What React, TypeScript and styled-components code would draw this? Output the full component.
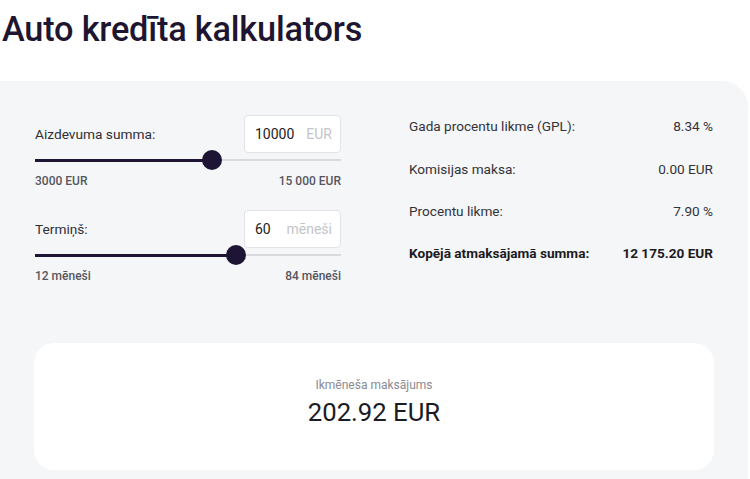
import styled, { createGlobalStyle } from "styled-components";
import { useState } from "react";

const GlobalStyle = createGlobalStyle`
  body {
    margin: 0;
    background: #fff;
    font-family: Roboto, "Liberation Sans", sans-serif;
    color: #2b2b33;
  }
`;

type SliderProps = {
  label: string;
  unit: string;
  min: number;
  max: number;
  value: number;
  minLabel: string;
  maxLabel: string;
  onChange: (v: number) => void;
};

function SliderField(props: SliderProps) {
  const pct = ((props.value - props.min) / (props.max - props.min)) * 100;
  return (
    <Field>
      <FieldHead>
        <FieldLabel>{props.label}</FieldLabel>
        <ValueBox>
          <ValueText>{props.value}</ValueText>
          <UnitText>{props.unit}</UnitText>
        </ValueBox>
      </FieldHead>
      <Range
        type="range"
        min={props.min}
        max={props.max}
        value={props.value}
        onChange={(e) => props.onChange(Number(e.target.value))}
        style={{
          backgroundSize: `${pct}% 3px, 100% 2px`,
        }}
      />
      <Limits>
        <span>{props.minLabel}</span>
        <span>{props.maxLabel}</span>
      </Limits>
    </Field>
  );
}

export default function App() {
  const [amount, setAmount] = useState(10000);
  const [term, setTerm] = useState(60);

  return (
    <>
      <GlobalStyle />
      <Title>Auto kredīta kalkulators</Title>
      <Panel>
        <Columns>
          <LeftColumn>
            <SliderField
              label="Aizdevuma summa:"
              unit="EUR"
              min={3000}
              max={15000}
              value={amount}
              minLabel="3000 EUR"
              maxLabel="15 000 EUR"
              onChange={setAmount}
            />
            <SliderField
              label="Termiņš:"
              unit="mēneši"
              min={12}
              max={84}
              value={term}
              minLabel="12 mēneši"
              maxLabel="84 mēneši"
              onChange={setTerm}
            />
          </LeftColumn>
          <RightColumn>
            <InfoRow>
              <span>Gada procentu likme (GPL):</span>
              <span>8.34 %</span>
            </InfoRow>
            <InfoRow>
              <span>Komisijas maksa:</span>
              <span>0.00 EUR</span>
            </InfoRow>
            <InfoRow>
              <span>Procentu likme:</span>
              <span>7.90 %</span>
            </InfoRow>
            <InfoRow $bold>
              <span>Kopējā atmaksājamā summa:</span>
              <span>12 175.20 EUR</span>
            </InfoRow>
          </RightColumn>
        </Columns>
        <ResultCard>
          <ResultLabel>Ikmēneša maksājums</ResultLabel>
          <ResultValue>202.92 EUR</ResultValue>
        </ResultCard>
      </Panel>
    </>
  );
}

const Title = styled.h1`
  margin: 0;
  padding: 9px 0 0 2px;
  height: 81px;
  box-sizing: border-box;
  font-size: 34.3px;
  font-weight: 500;
  color: #1e1631;
  letter-spacing: -0.2px;
`;

const Panel = styled.section`
  width: 748px;
  background: #f5f6f8;
  border-radius: 0 26px 0 0;
  padding: 34px 35px 9px 35px;
  box-sizing: border-box;
`;

const Columns = styled.div`
  display: grid;
  grid-template-columns: 306px 304px;
  column-gap: 68px;
`;

const LeftColumn = styled.div`
  display: flex;
  flex-direction: column;
  gap: 22px;
`;

const Field = styled.div`
  display: flex;
  flex-direction: column;
`;

const FieldHead = styled.div`
  display: flex;
  align-items: center;
  justify-content: space-between;
  height: 38px;
`;

const FieldLabel = styled.span`
  font-size: 13.7px;
  color: #2f2f36;
`;

const ValueBox = styled.div`
  width: 97px;
  height: 38px;
  box-sizing: border-box;
  background: #fff;
  border: 1px solid #e2e3e6;
  border-radius: 4px;
  display: flex;
  align-items: center;
  justify-content: space-between;
  padding: 0 8px 0 10px;
`;

const ValueText = styled.span`
  font-size: 14px;
  color: #222;
`;

const UnitText = styled.span`
  font-size: 14px;
  color: #c4c5c9;
`;

const Range = styled.input`
  -webkit-appearance: none;
  appearance: none;
  width: 100%;
  height: 20px;
  margin: -3px 0 0 0;
  background-color: transparent;
  background-image: linear-gradient(#1e1433, #1e1433),
    linear-gradient(#d9dadd, #d9dadd);
  background-repeat: no-repeat;
  background-position: left center, left center;
  position: relative;
  z-index: 1;

  &::-webkit-slider-runnable-track {
    height: 20px;
    background: transparent;
  }
  &::-webkit-slider-thumb {
    -webkit-appearance: none;
    width: 20px;
    height: 20px;
    border-radius: 50%;
    background: #1e1433;
    border: none;
    cursor: pointer;
  }
  &::-moz-range-thumb {
    width: 20px;
    height: 20px;
    border-radius: 50%;
    background: #1e1433;
    border: none;
  }
  &:focus {
    outline: none;
  }
`;

const Limits = styled.div`
  display: flex;
  justify-content: space-between;
  margin-top: 4px;
  font-size: 12px;
  font-weight: 500;
  color: #56565e;
  line-height: 14px;
`;

const RightColumn = styled.div`
  display: flex;
  flex-direction: column;
  margin-top: -10px;
`;

const InfoRow = styled.div<{ $bold?: boolean }>`
  display: flex;
  justify-content: space-between;
  align-items: center;
  height: 42.4px;
  font-size: 13.6px;
  font-weight: ${(p) => (p.$bold ? 700 : 400)};
  color: ${(p) => (p.$bold ? "#1b1b22" : "#333339")};
`;

const ResultCard = styled.div`
  margin-top: 60px;
  margin-left: -1px;
  width: 680px;
  height: 127px;
  box-sizing: border-box;
  padding-bottom: 8px;
  background: #fff;
  border-radius: 20px;
  display: flex;
  flex-direction: column;
  align-items: center;
  justify-content: center;
  gap: 5px;
`;

const ResultLabel = styled.span`
  font-size: 12px;
  color: #8a8a92;
`;

const ResultValue = styled.span`
  font-size: 25.7px;
  color: #1b1b25;
`;
